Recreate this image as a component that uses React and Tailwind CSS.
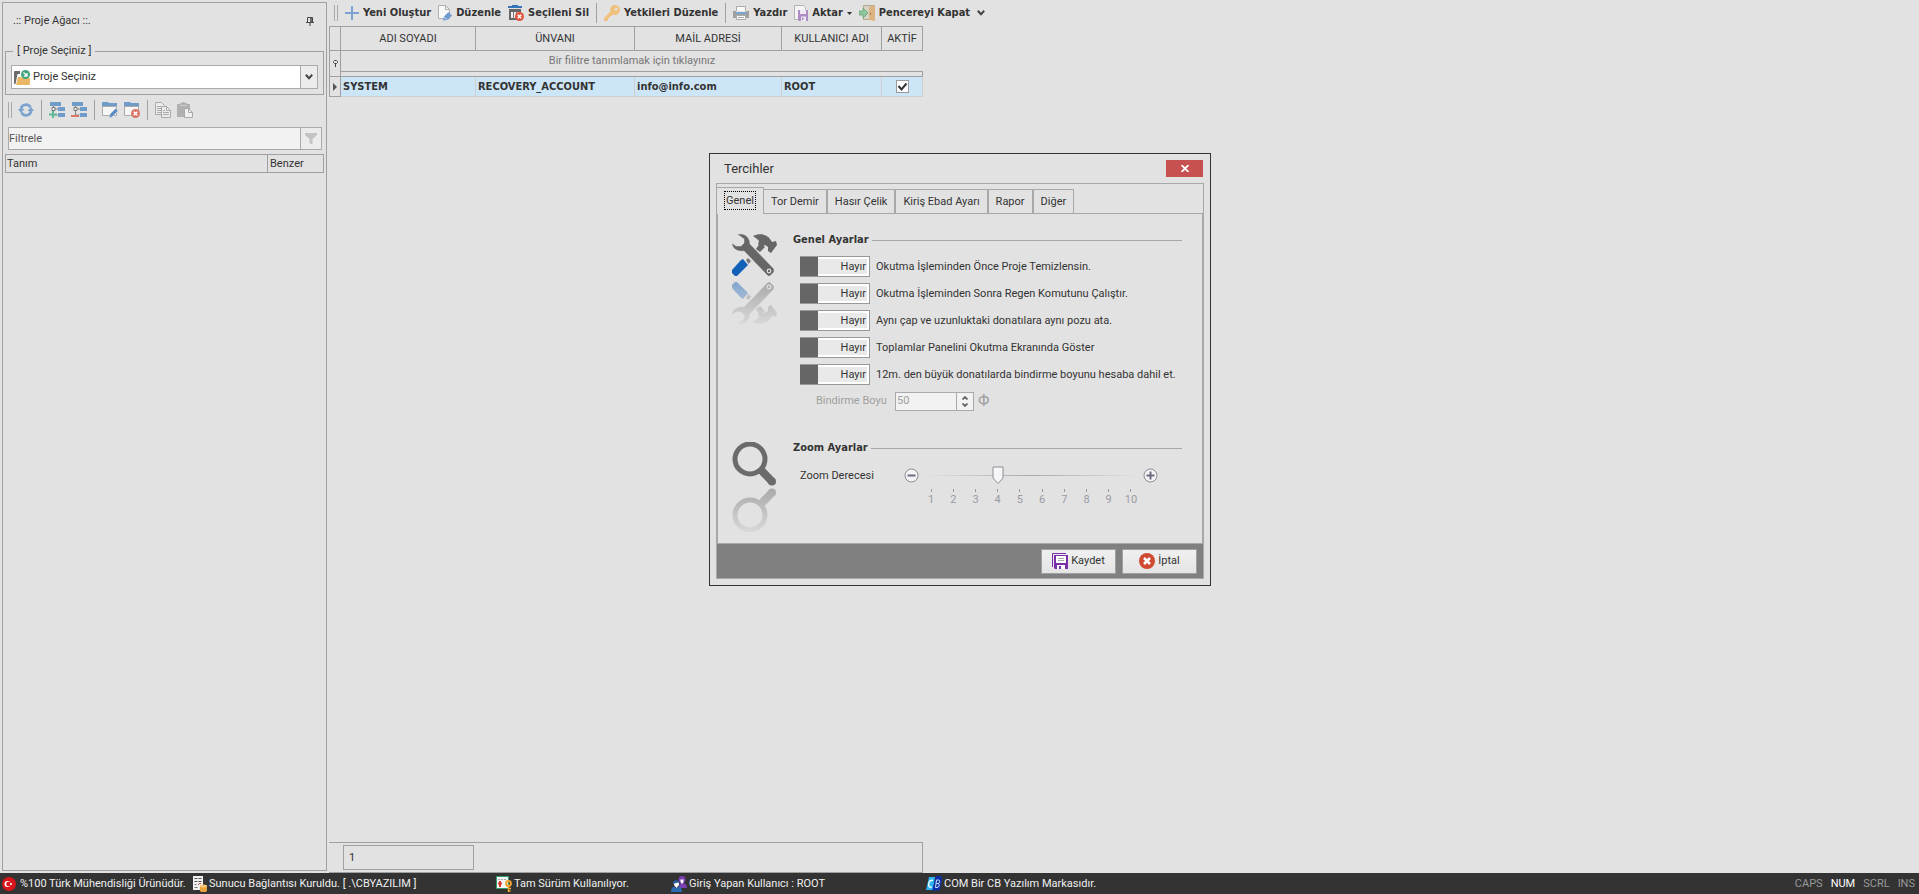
import React, { useState } from "react";

const GRIP = "h-4 w-1 shrink-0 border-x border-[#a8a8a8]";
const SEPARATOR = "w-px shrink-0 bg-[#a0a0a0]";
const BOLD = "font-['DejaVu_Sans_Condensed',sans-serif] font-bold";

function PinIcon() {
  return (
    <svg width="8" height="9" viewBox="0 0 8 9" fill="none" stroke="#444">
      <path d="M1.500 5V.5h5V5M0 5.500h8M4 6v3" />
      <path d="M5 1v4" strokeWidth="1.500" />
    </svg>
  );
}

function ChevronIcon() {
  return (
    <svg width="8" height="6" viewBox="0 0 8 6" fill="none" stroke="#444" strokeWidth="2">
      <path d="M.8 .8 4 4.200 7.200 .8" />
    </svg>
  );
}

function FolderArrowIcon() {
  return (
    <svg width="16" height="15" viewBox="0 0 16 15">
      <path d="M0 14V1.500L1 1h5v3H3.500L1.500 14z" fill="#6b6b6b" />
      <path d="M2 15 4 7h3l1 1h8v6l-1 1z" fill="#eab765" />
      <circle cx="11.500" cy="4.500" r="4.500" fill="#3fa37c" />
      <path d="M9.500 2.500 13 6M13 3v3.200H9.800" fill="none" stroke="#fff" strokeWidth="1.200" />
    </svg>
  );
}

function RefreshIcon() {
  return (
    <svg width="16" height="14" viewBox="0 0 16 14" fill="none" stroke="#7aa3cf" strokeWidth="2.600">
      <path d="M3 6A5 5 0 0 1 12.500 4.500M13 8a5 5 0 0 1-9.500 1.500" />
      <path d="M0 6h6.500L3 10zM9.500 8H16l-3-4z" fill="#7aa3cf" stroke="none" />
    </svg>
  );
}

function TreeIcon({ add }) {
  return (
    <svg width="16" height="16" viewBox="0 0 16 16">
      <path d="M1 0h11v4H1zM9 5h7v4H9zM9 11h7v4H9z" fill="#6f9cc9" />
      <path d="M4.500 4v9h4M5 7h4" stroke="#888" fill="none" />
      <path d="M3 5.500h3v3H3z" fill="#f4f4f4" stroke="#777" />
      {add ? (
        <path d="M0 12.500h8M4 9v7" stroke="#5fba98" strokeWidth="2" />
      ) : (
        <path d="M0 14h8" stroke="#dd7566" strokeWidth="2" />
      )}
    </svg>
  );
}

function FolderIcon({ remove }) {
  return (
    <svg width="16" height="16" viewBox="0 0 16 16">
      <path d="M0 4V0h6l1 1h8v4H0z" fill="#6f9cc9" />
      <path d="M.5 4.500h14v9H.5z" fill="#f6f6f6" stroke="#aaa" />
      {remove ? (
        <>
          <circle cx="11.500" cy="11.500" r="4.500" fill="#dd7566" />
          <path d="m9.800 9.800 3.400 3.400m0-3.400-3.400 3.400" stroke="#fff" strokeWidth="1.500" />
        </>
      ) : (
        <path d="m7 16 1-4 6-6 2 3-6 6z" fill="#5b8cc4" stroke="#e2e2e2" strokeWidth=".6" />
      )}
    </svg>
  );
}

function CopyIcon() {
  return (
    <svg width="16" height="16" viewBox="0 0 16 16" fill="#ececec" stroke="#aaa">
      <path d="M.5 .5h6l3 3v9h-9z" />
      <path d="M2 4.500h4M2 6.500h4M2 8.500h4M2 10.500h4" />
      <path d="M6.500 4.500h5l4 4v7h-9z" />
      <path d="M11.500 4.500v4h4M8 10.500h6M8 12.500h6M8 8.500h2" fill="none" />
    </svg>
  );
}

function PasteIcon() {
  return (
    <svg width="16" height="16" viewBox="0 0 16 16">
      <path d="M0 2h3V1h2l1-1h1l1 1h2v1h3v13H0z" fill="#b0b0b0" />
      <path d="M3 3.500h7" stroke="#d0d0d0" />
      <path d="M7.500 6.500h4l4 4v5h-8z" fill="#f0f0f0" stroke="#aaa" />
      <path d="M11.500 6.500v4h4" fill="none" stroke="#aaa" />
    </svg>
  );
}

function FunnelIcon() {
  return (
    <svg width="12" height="12" viewBox="0 0 12 12">
      <path d="M0 0h12v2L7.500 6v6L4.500 10V6L0 2z" fill="#c4c4c4" />
    </svg>
  );
}

function PlusIcon() {
  return (
    <svg width="14" height="14" viewBox="0 0 14 14">
      <path d="M0 7h14M7 0v14" stroke="#7aa3cf" strokeWidth="2" />
    </svg>
  );
}

function EditPageIcon() {
  return (
    <svg width="14" height="16" viewBox="0 0 14 16">
      <path d="M.5 .5h7l4 4v9h-11z" fill="#fafafa" stroke="#b0b0b0" />
      <path d="M7.500 .5v4h4" fill="none" stroke="#b0b0b0" />
      <path d="m5 15.500 1-4L10.500 7 14 10.500 9.500 15z" fill="#6f9cd0" />
      <path d="m6 12 3.500 3" stroke="#c5d8ee" />
    </svg>
  );
}

function TrashIcon() {
  return (
    <svg width="16" height="16" viewBox="0 0 16 16">
      <path d="M0 1h4V0h6v1h4v2H0z" fill="#3474b8" />
      <path d="M1 4h12v2H1z" fill="#666" />
      <path d="M2 6h10v8H2z" fill="#f0f0f0" stroke="#666" strokeWidth="2" />
      <path d="M5.500 7v7M8.500 7v7" stroke="#777" strokeWidth="1" />
      <circle cx="11.500" cy="11.500" r="4.500" fill="#e05540" />
      <path d="m9.800 9.800 3.400 3.400m0-3.400-3.400 3.400" stroke="#fff" strokeWidth="1.500" />
    </svg>
  );
}

function KeyIcon() {
  return (
    <svg width="16" height="16" viewBox="0 0 16 16">
      <path
        fillRule="evenodd"
        d="M11 0a5 5 0 1 1-2 9.600L7.500 11H6v2H4v2l-1 1H0v-3l6.400-6.400A5 5 0 0 1 11 0zm1 2.500a1.500 1.500 0 1 0 0 3 1.500 1.500 0 0 0 0-3z"
        fill="#f0c17c"
      />
    </svg>
  );
}

function PrinterIcon() {
  return (
    <svg width="16" height="14" viewBox="0 0 16 14">
      <path d="M3.500 5V.5h9V5" fill="#fafafa" stroke="#aaa" />
      <path d="M0 5h3v2h10V5h3v7H0z" fill="#a0a0a0" />
      <path d="M3 6h10v2H3z" fill="#79a5d3" />
      <path d="M3.500 9.500h9v4h-9z" fill="#fafafa" stroke="#aaa" />
      <path d="M5 11.500h6" stroke="#aaa" />
    </svg>
  );
}

function ExportIcon() {
  return (
    <svg width="14" height="16" viewBox="0 0 14 16">
      <path d="M.5 .5h9l2 2v12H.5z" fill="#f4f4f4" stroke="#b4b4b4" />
      <path d="M4 5h10v11H5l-1-1z" fill="#ad8cc6" />
      <path d="M6 5h6v4H6zM7 11.500h5V16H7z" fill="#f0eaf5" />
      <path d="M8 12.500h1.500V15H8z" fill="#ad8cc6" />
    </svg>
  );
}

function DoorIcon() {
  return (
    <svg width="16" height="16" viewBox="0 0 16 16">
      <path d="M4.500 .5h11v14h-11z" fill="#d8d2c6" stroke="#b3a78f" />
      <path d="M10 2l6-2v16l-6-1z" fill="#dcb483" />
      <path d="M11 8h1v1.500h-1z" fill="#8c6b42" />
      <path d="M0 6h4V3l5 5-5 5v-3H0z" fill="#8cc79a" stroke="#5f9e70" strokeWidth=".7" />
    </svg>
  );
}

function TurkishFlagIcon() {
  return (
    <svg width="14" height="14" viewBox="0 0 14 14">
      <circle cx="7" cy="7" r="7" fill="#d8141c" />
      <circle cx="5.500" cy="7" r="3" fill="#fff" />
      <circle cx="6.500" cy="7" r="2.300" fill="#d8141c" />
      <circle cx="9" cy="7" r="1" fill="#fff" />
    </svg>
  );
}

function ServerIcon() {
  return (
    <svg width="14" height="16" viewBox="0 0 14 16">
      <path d="M0 0h10v14H0z" fill="#f0f0f0" />
      <path d="M1.500 2.500h7M1.500 5.500h7" stroke="#555" strokeDasharray="3 1" />
      <path d="M1.500 8.500h2M5 8.500h1M1.500 11.500h3" stroke="#777" />
      <path d="M6 7.500h2" stroke="#d04b35" />
      <path d="M7 10v4.500a3.500 1.500 0 0 0 7 0V10z" fill="#e8a33d" />
      <ellipse cx="10.500" cy="10" rx="3.500" ry="1.500" fill="#f6c878" />
    </svg>
  );
}

function LicenseIcon() {
  return (
    <svg width="16" height="16" viewBox="0 0 16 16">
      <path d="M.5 .5h12v12H.5z" fill="#f5f5f5" stroke="#2f9e6b" />
      <path d="M2 3.500h9" stroke="#aaa" strokeDasharray="2 1" />
      <path d="M4 5v6M2 7.500h4" stroke="#d83a2b" strokeWidth="2" />
      <circle cx="12.500" cy="7.500" r="2.400" fill="none" stroke="#f0a32a" strokeWidth="2" />
      <path d="M12.500 10v6M12.500 12.500h2.500M12.500 15h2" stroke="#f0a32a" strokeWidth="1.500" />
    </svg>
  );
}

function UsersIcon() {
  return (
    <svg width="16" height="16" viewBox="0 0 16 16">
      <circle cx="11" cy="3.500" r="3.500" fill="#7a3fb0" />
      <path d="M8 12c0-4 1-5 3.500-5S16 8.500 16 12z" fill="#7a3fb0" />
      <path d="M9.500 3.500h3V6L11 8 9.500 6z" fill="#fff" />
      <path d="M3 6h5v3l-2.500 3L3 9z" fill="#fff" />
      <path d="M2 8c-1-5 7-5 6.500 0L7 6.500z" fill="#2c5f9e" />
      <path d="M0 16c0-4 2-5.500 3.500-5.500l2 2 2-2C9 10.500 11 12 11 16z" fill="#2c6bb3" />
    </svg>
  );
}

function CbIcon() {
  return (
    <svg width="16" height="15" viewBox="0 0 16 15">
      <path d="M3 1h6L7 14H0z" fill="#2db3f0" />
      <path d="M10 0h5l1 3-2 11-8 1z" fill="#0c2fa8" />
      <path d="M7 4.500C4.500 3.500 3 5.500 2.700 8s1 3.800 3 3" fill="none" stroke="#fff" strokeWidth="1.300" />
      <path d="M9.500 11.500 10.500 4h2c2 0 1.500 3.500-.5 3.500h-1.500 1.500c2 0 1.500 4-1 4z" fill="none" stroke="#cfe4ff" />
    </svg>
  );
}

function ToolsShape() {
  return (
    <>
      <path d="M21 2C27-1 35 0 38 5l2 3 4-1 1 4-6 8-3-2v-4l-3-2-4 2-3-3 1-3-2-2z" fill="#666" />
      <path d="m24 15 4-6 5 4-5 5z" fill="#666" />
      <path
        d="M5 0h5c5 1 8 5 8 10l24 25v3l-4 4h-2L12 17C6 18 0 15 0 9l4 3h5l3-3V5z"
        fill="#666"
        stroke="#e2e2e2"
        strokeWidth=".5"
      />
      <circle cx="37" cy="37" r="1.800" fill="none" stroke="#e2e2e2" strokeWidth="1.200" />
      <path d="m14 26 2-2 3 3-2.500 3z" fill="#777" />
      <path d="M0 36 9 26l2-1 5 6L5 42H3l-3-3z" fill="#1260b8" />
    </>
  );
}

function SearchShape() {
  return (
    <>
      <circle cx="18" cy="17" r="15" fill="none" stroke="#6b6b6b" strokeWidth="5" />
      <path d="m29 28 11 11.500" stroke="#6b6b6b" strokeWidth="8" />
      <circle cx="40" cy="39.500" r="4" fill="#6b6b6b" />
    </>
  );
}

// Icon with a faded mirror image below it
function ReflectedIcon({ id, children }) {
  return (
    <svg width="46" height="92" viewBox="0 0 46 92">
      <defs>
        <linearGradient id={id} x1="0" y1="0" x2="0" y2="1">
          <stop offset="0" stopColor="#fff" stopOpacity=".08" />
          <stop offset="1" stopColor="#fff" stopOpacity=".5" />
        </linearGradient>
        <mask id={`${id}-mask`}>
          <rect width="46" height="46" fill={`url(#${id})`} />
        </mask>
      </defs>
      {children}
      <g transform="translate(0 90) scale(1 -1)">
        <g mask={`url(#${id}-mask)`}>{children}</g>
      </g>
    </svg>
  );
}

function SaveIcon() {
  return (
    <svg width="16" height="16" viewBox="0 0 16 16">
      <path d="M.5 14V.5H14" fill="none" stroke="#7a2fa8" />
      <path d="M2 2h14v14H3l-1-1z" fill="#7a2fa8" />
      <path d="M4 3h10v7H4zM5 12h8v4H5z" fill="#fff" />
      <path d="M6 5.500h6M6 7.500h6" stroke="#aaa" />
      <path d="M7 13h2v3H7z" fill="#7a2fa8" />
    </svg>
  );
}

function CancelIcon() {
  return (
    <svg width="16" height="16" viewBox="0 0 16 16">
      <circle cx="8" cy="8" r="8" fill="#cf4a30" />
      <path d="m5 5 6 6m0-6-6 6" stroke="#fff" strokeWidth="2.600" />
    </svg>
  );
}

function RoundIcon({ plus }) {
  return (
    <svg width="15" height="15" viewBox="0 0 15 15">
      <circle cx="7.500" cy="7.500" r="6.500" fill="#f4f4f6" stroke="#8d8d95" />
      <path d={plus ? "M3.500 7.500h8M7.500 3.500v8" : "M3.500 7.500h8"} stroke="#6c6c80" strokeWidth="2" />
    </svg>
  );
}

function ProjectTree() {
  return (
    <aside className="mt-0.5 mb-0.5 ml-0.5 flex w-[325px] shrink-0 flex-col border border-[#a0a0a0] px-0.5">
      <div className="flex h-9 items-center justify-between pr-2.5 pl-2">
        <h2>.:: Proje Ağacı ::.</h2>
        <button type="button" aria-label="Sabitle">
          <PinIcon />
        </button>
      </div>

      <fieldset className="mt-1 h-[52px] border border-[#a0a0a0] px-[5px]">
        <legend className="ml-0.5 px-1 leading-4">[ Proje Seçiniz ]</legend>
        <div className="relative mt-1.5 flex h-6 items-center border border-[#aaa] bg-white">
          <span className="pointer-events-none absolute left-0.5">
            <FolderArrowIcon />
          </span>
          <select
            aria-label="Proje Seçiniz"
            className="h-full w-full appearance-none pl-[21px] outline-none"
          >
            <option>Proje Seçiniz</option>
          </select>
          <span className="pointer-events-none absolute right-0 flex h-full w-[17px] items-center justify-center border-l border-[#aaa] bg-[#ececec]">
            <ChevronIcon />
          </span>
        </div>
      </fieldset>

      <div className="mt-[5px] flex h-5 items-center gap-1.5 pl-[3px]">
        <span className={GRIP} />
        <button type="button" aria-label="Yenile"><RefreshIcon /></button>
        <span className={`${SEPARATOR} mx-px h-5`} />
        <button type="button" aria-label="Ekle"><TreeIcon add /></button>
        <button type="button" aria-label="Çıkar"><TreeIcon /></button>
        <span className={`${SEPARATOR} mx-px h-5`} />
        <button type="button" aria-label="Proje düzenle"><FolderIcon /></button>
        <button type="button" aria-label="Proje sil"><FolderIcon remove /></button>
        <span className={`${SEPARATOR} mx-px h-5`} />
        <button type="button" aria-label="Kopyala"><CopyIcon /></button>
        <button type="button" aria-label="Yapıştır"><PasteIcon /></button>
      </div>

      <div className="mt-[7px] mr-0.5 ml-[3px] flex h-[23px] border border-[#aaa] bg-[#f2f2f2]">
        <input
          aria-label="Filtrele"
          placeholder="Filtrele"
          className="min-w-0 flex-1 outline-none placeholder:text-[#555]"
        />
        <button
          type="button"
          aria-label="Filtre"
          className="flex w-[21px] items-center justify-center border-l border-[#aaa] bg-[#ececec]"
        >
          <FunnelIcon />
        </button>
      </div>

      <table className="mt-1 w-full table-fixed border-separate border-spacing-0 border border-[#a0a0a0] text-left">
        <thead>
          <tr className="h-[17px]">
            <th className="border-r border-[#a0a0a0] pl-px font-normal">Tanım</th>
            <th className="w-[55px] pl-0.5 font-normal">Benzer</th>
          </tr>
        </thead>
      </table>
    </aside>
  );
}

function ToolButton({ icon, children }) {
  return (
    <button type="button" className="flex items-center gap-1">
      {icon}
      {children}
    </button>
  );
}

function Toolbar() {
  return (
    <div className={`flex h-[26px] items-center gap-[7px] pl-[5px] whitespace-nowrap ${BOLD}`}>
      <span className={GRIP} />
      <ToolButton icon={<PlusIcon />}>Yeni Oluştur</ToolButton>
      <ToolButton icon={<EditPageIcon />}>Düzenle</ToolButton>
      <ToolButton icon={<TrashIcon />}>Seçileni Sil</ToolButton>
      <span className={`${SEPARATOR} h-5`} />
      <ToolButton icon={<KeyIcon />}>Yetkileri Düzenle</ToolButton>
      <span className={`${SEPARATOR} h-5`} />
      <ToolButton icon={<PrinterIcon />}>Yazdır</ToolButton>
      <ToolButton icon={<ExportIcon />}>
        Aktar
        <svg width="5" height="3" viewBox="0 0 5 3">
          <path d="M0 0h5L2.500 3z" fill="#333" />
        </svg>
      </ToolButton>
      <ToolButton icon={<DoorIcon />}>Pencereyi Kapat</ToolButton>
      <button type="button" aria-label="Diğer komutlar">
        <ChevronIcon />
      </button>
    </div>
  );
}

const HEAD_CELL = "border-r border-b border-[#a0a0a0] p-0 text-center font-normal";
const BODY_CELL = "border-r border-b border-[#cfcfcf] bg-[#cde6f7] py-0 pr-0 pl-0.5";

function UserGrid() {
  return (
    <table className="w-[594px] table-fixed border-separate border-spacing-0 border-t border-l border-[#a0a0a0]">
      <colgroup>
        <col className="w-[11px]" />
        <col className="w-[135px]" />
        <col className="w-[159px]" />
        <col className="w-[147px]" />
        <col className="w-[100px]" />
        <col className="w-[41px]" />
      </colgroup>
      <thead>
        <tr className="h-6">
          <th className={HEAD_CELL} />
          <th className={HEAD_CELL}>ADI SOYADI</th>
          <th className={HEAD_CELL}>ÜNVANI</th>
          <th className={HEAD_CELL}>MAİL ADRESİ</th>
          <th className={HEAD_CELL}>KULLANICI ADI</th>
          <th className={HEAD_CELL}>AKTİF</th>
        </tr>
      </thead>
      <tbody>
        <tr className="h-[21px]">
          <td rowSpan={2} className={HEAD_CELL}>
            <svg className="mx-auto" width="5" height="7" viewBox="0 0 5 7" fill="none" stroke="#444">
              <path d="M.5 1.500 1.500 .5h2l1 1v1l-1 1h-2l-1-1zM2.500 3v4" />
            </svg>
          </td>
          <td colSpan={5} className="border-b border-[#a0a0a0] p-0 text-center text-[#777]">
            Bir filitre tanımlamak için tıklayınız
          </td>
        </tr>
        <tr className="h-[5px]">
          <td colSpan={5} className={HEAD_CELL} />
        </tr>
        <tr className={`h-5 ${BOLD}`}>
          <td className={HEAD_CELL}>
            <svg className="mx-auto" width="4" height="8" viewBox="0 0 4 8">
              <path d="M0 0l4 4-4 4z" fill="#555" />
            </svg>
          </td>
          <td className={BODY_CELL}>SYSTEM</td>
          <td className={BODY_CELL}>RECOVERY_ACCOUNT</td>
          <td className={BODY_CELL}>info@info.com</td>
          <td className={BODY_CELL}>ROOT</td>
          <td className="border-r border-b border-[#cfcfcf] bg-[#cde6f7] p-0">
            <label className="relative mx-auto flex size-[13px]">
              <input
                type="checkbox"
                aria-label="Aktif"
                defaultChecked
                className="peer size-[13px] appearance-none border border-[#999] bg-white"
              />
              <svg
                className="pointer-events-none absolute inset-0 hidden peer-checked:block"
                viewBox="0 0 13 13"
                fill="none"
                stroke="#333"
                strokeWidth="2"
              >
                <path d="m2.500 6 3 3.500L10.500 3.500" />
              </svg>
            </label>
          </td>
        </tr>
      </tbody>
    </table>
  );
}

const TABS = ["Genel", "Tor Demir", "Hasır Çelik", "Kiriş Ebad Ayarı", "Rapor", "Diğer"];

const OPTIONS = [
  "Okutma İşleminden Önce Proje Temizlensin.",
  "Okutma İşleminden Sonra Regen Komutunu Çalıştır.",
  "Aynı çap ve uzunluktaki donatılara aynı pozu ata.",
  "Toplamlar Panelini Okutma Ekranında Göster",
  "12m. den büyük donatılarda bindirme boyunu hesaba dahil et.",
];

function Toggle({ label }) {
  const [on, setOn] = useState(false);
  return (
    <label className="flex h-[21px] items-center gap-1.5 whitespace-nowrap">
      <input
        type="checkbox"
        className="sr-only"
        checked={on}
        onChange={(e) => setOn(e.target.checked)}
      />
      <span
        className={`flex h-full w-[70px] shrink-0 border border-l-0 border-[#999] bg-white ${
          on ? "flex-row-reverse" : ""
        }`}
      >
        <span className="w-[18px] bg-[#666]" />
        <span className="my-0.5 mr-0.5 flex flex-1 items-center justify-end bg-[#e9e9e9] pr-px">
          {on ? "Evet" : "Hayır"}
        </span>
      </span>
      {label}
    </label>
  );
}

function SectionTitle({ children }) {
  return (
    <div className={`flex h-4 items-center gap-[3px] ${BOLD}`}>
      <h3>{children}</h3>
      <span className="h-px flex-1 bg-[#a8a8a8]" />
    </div>
  );
}

function ZoomSlider() {
  const [zoom, setZoom] = useState(4);
  return (
    <div className="flex gap-px">
      <button
        type="button"
        aria-label="Uzaklaştır"
        className="h-[19px]"
        onClick={() => setZoom(Math.max(1, zoom - 1))}
      >
        <RoundIcon />
      </button>
      <div className="w-[222px]">
        <div className="relative mx-[11px] h-[19px]">
          <span className="absolute -inset-x-2 top-[9px] h-px bg-linear-to-r from-transparent via-[#aaa] to-transparent" />
          <svg
            className="absolute top-0 -ml-1.5"
            style={{ left: `${((zoom - 1) / 9) * 100}%` }}
            width="12"
            height="19"
            viewBox="0 0 12 19"
          >
            <path d="M1 1h10v11l-5 5.500L1 12z" fill="#f6f6f8" stroke="#8e8e96" />
          </svg>
          <input
            id="zoom"
            type="range"
            min="1"
            max="10"
            value={zoom}
            onChange={(e) => setZoom(Number(e.target.value))}
            className="absolute inset-0 w-full opacity-0"
          />
        </div>
        <ol className="mt-1 grid grid-cols-10 text-center text-[#9a9aa4]">
          {[1, 2, 3, 4, 5, 6, 7, 8, 9, 10].map((n) => (
            <li key={n} className="flex flex-col items-center leading-4">
              <span className="h-[3px] w-px bg-[#9a9aa4]" />
              {n}
            </li>
          ))}
        </ol>
      </div>
      <button
        type="button"
        aria-label="Yakınlaştır"
        className="h-[19px]"
        onClick={() => setZoom(Math.min(10, zoom + 1))}
      >
        <RoundIcon plus />
      </button>
    </div>
  );
}

const FOOTER_BUTTON =
  "flex h-[25px] w-[75px] items-center justify-center gap-[3px] border border-[#a0a0a0] bg-linear-to-b from-[#f0f0f0] to-[#e4e4e4]";

function PreferencesDialog() {
  const [tab, setTab] = useState("Genel");
  return (
    <div
      role="dialog"
      aria-label="Tercihler"
      className="absolute top-[153px] left-[709px] w-[502px] border border-[#333] bg-[#e2e2e2] px-1.5 pb-1.5"
    >
      <div className="flex h-[29px] items-center justify-between pr-px pl-2">
        <h2 className="text-[13px]">Tercihler</h2>
        <button
          type="button"
          aria-label="Kapat"
          className="flex h-[17px] w-[37px] items-center justify-center bg-[#c75050]"
        >
          <svg width="8" height="7" viewBox="0 0 8 7" stroke="#fff" strokeWidth="1.800">
            <path d="m.5 0 7 7m0-7-7 7" />
          </svg>
        </button>
      </div>

      <div className="border border-[#a8a8a8]">
        <div role="tablist" className="flex h-[30px] items-end border-[#a8a8a8] pt-[3px]">
          {TABS.map((name) => (
            <button
              key={name}
              type="button"
              role="tab"
              aria-selected={tab === name}
              onClick={() => setTab(name)}
              className={
                tab === name
                  ? "flex h-[27px] items-center border-t border-r border-[#a8a8a8] px-[7px] pb-0.5"
                  : "flex h-[25px] items-center border-t border-r-2 border-b border-[#a8a8a8] px-[7px] last-of-type:border-r"
              }
            >
              {tab === name ? (
                <span className="border border-dotted border-black px-px leading-[17px]">{name}</span>
              ) : (
                name
              )}
            </button>
          ))}
          <span className="flex-1 self-end border-b border-[#a8a8a8]" />
        </div>

        <div role="tabpanel" className="flex h-[329px] gap-[15px] border-x border-[#a8a8a8] pr-5 pl-3.5">
          <div className="flex flex-col">
            <div className="mt-5">
              <ReflectedIcon id="tools">
                <ToolsShape />
              </ReflectedIcon>
            </div>
            <div className="mt-[116px]">
              <ReflectedIcon id="search">
                <SearchShape />
              </ReflectedIcon>
            </div>
          </div>
          <div className="min-w-0 flex-1 pt-[18px]">
            <SectionTitle>Genel Ayarlar</SectionTitle>
            <div className="mt-2 flex flex-col gap-1.5 pl-[7px]">
              {OPTIONS.map((label) => (
                <Toggle key={label} label={label} />
              ))}
            </div>
            <div className="mt-1.5 flex h-5 items-center pl-[23px] text-[#a0a0a0]">
              <label htmlFor="overlap" className="w-[79px]">
                Bindirme Boyu
              </label>
              <div className="flex h-[19px] w-[79px] border border-[#aaa] bg-[#f2f2f2]">
                <input
                  id="overlap"
                  type="text"
                  disabled
                  defaultValue="50"
                  className="w-[60px] pl-px"
                />
                <span className="flex flex-1 flex-col items-center justify-center gap-[3px] border-l border-[#aaa]">
                  <svg width="6" height="4" viewBox="0 0 6 4" fill="none" stroke="#666" strokeWidth="1.800">
                    <path d="M.5 3.500 3 1l2.500 2.500" />
                  </svg>
                  <svg width="6" height="4" viewBox="0 0 6 4" fill="none" stroke="#666" strokeWidth="1.800">
                    <path d="M.5 .5 3 3 5.500 .5" />
                  </svg>
                </span>
              </div>
              <span className="ml-1 text-base">Φ</span>
            </div>
            <div className="mt-[29px]">
              <SectionTitle>Zoom Ayarlar</SectionTitle>
            </div>
            <div className="mt-2.5 flex pl-[7px]">
              <label htmlFor="zoom" className="w-[104px] leading-[19px]">
                Zoom Derecesi
              </label>
              <ZoomSlider />
            </div>
          </div>
        </div>

        <div className="flex h-[35px] items-center justify-end gap-1.5 border-t border-[#a8a8a8] bg-[#808080] pr-1.5">
          <button type="button" className={FOOTER_BUTTON}>
            <SaveIcon />
            Kaydet
          </button>
          <button type="button" className={FOOTER_BUTTON}>
            <CancelIcon />
            İptal
          </button>
        </div>
      </div>
    </div>
  );
}

function StatusItem({ icon, width, children }) {
  return (
    <span className={`flex shrink-0 items-center gap-0.5 whitespace-nowrap ${width}`}>
      {icon}
      {children}
    </span>
  );
}

function StatusBar() {
  return (
    <footer className="flex h-[21px] items-center bg-[#333] pr-1 pl-0.5 text-[#f0f0f0]">
      <StatusItem width="w-[191px]" icon={<span className="mr-0.5"><TurkishFlagIcon /></span>}>
        %100 Türk Mühendisliği Ürünüdür.
      </StatusItem>
      <StatusItem width="w-[303px]" icon={<ServerIcon />}>
        Sunucu Bağlantısı Kuruldu. [ .\CBYAZILIM ]
      </StatusItem>
      <StatusItem width="w-[175px]" icon={<LicenseIcon />}>Tam Sürüm Kullanılıyor.</StatusItem>
      <StatusItem width="w-[255px]" icon={<UsersIcon />}>Giriş Yapan Kullanıcı : ROOT</StatusItem>
      <StatusItem width="flex-1" icon={<CbIcon />}>COM Bir CB Yazılım Markasıdır.</StatusItem>
      <div className="flex gap-2 text-[#999]">
        <span>CAPS</span>
        <span className="text-white">NUM</span>
        <span>SCRL</span>
        <span>INS</span>
      </div>
    </footer>
  );
}

export default function App() {
  return (
    <div className="relative flex min-h-screen flex-col bg-[#e2e2e2] font-['Roboto','DejaVu_Sans_Condensed',sans-serif] text-[11px] leading-4 text-[#333]">
      <div className="flex flex-1">
        <ProjectTree />
        <main className="flex flex-1 flex-col pl-0.5">
          <Toolbar />
          <UserGrid />
          <div className="mt-auto h-[31px] w-[594px] border border-l-0 border-[#a0a0a0] py-0.5 pl-3.5">
            <div className="flex h-[25px] w-[131px] items-center border border-[#a0a0a0] pl-[5px]">1</div>
          </div>
        </main>
      </div>
      <StatusBar />
      <PreferencesDialog />
    </div>
  );
}
